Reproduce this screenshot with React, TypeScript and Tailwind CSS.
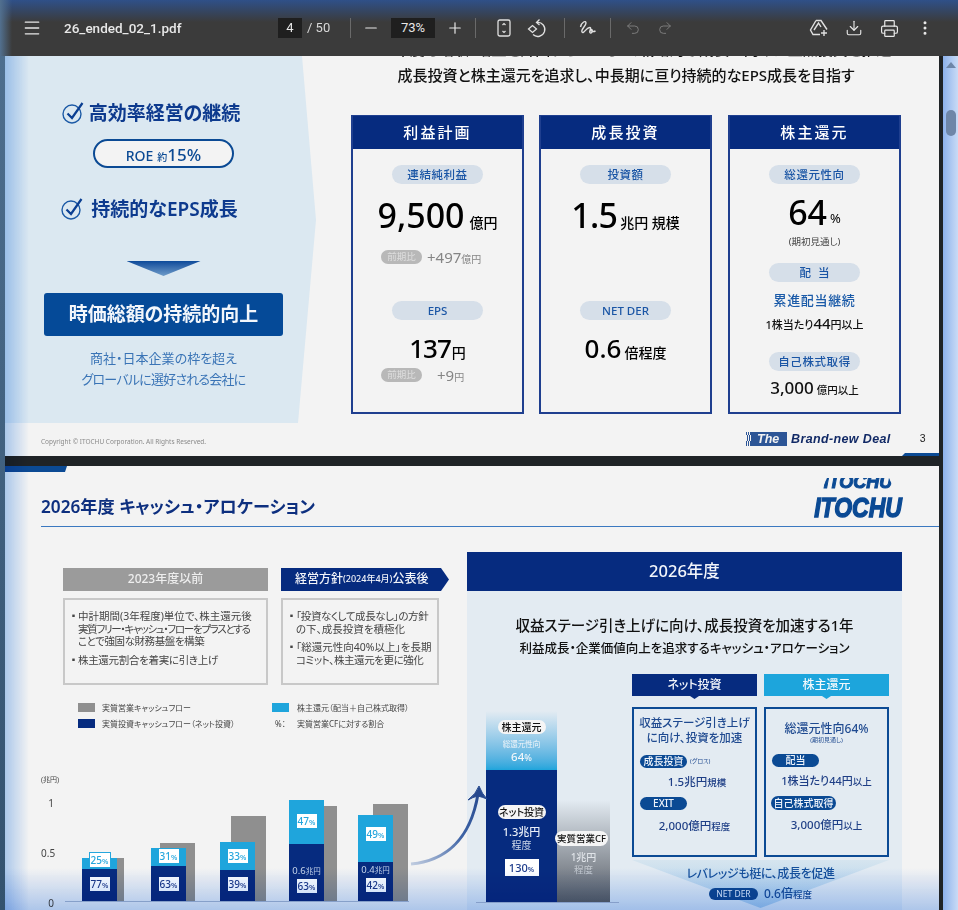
import React from "react";
import { Menu, Minus, Plus, Undo2, Redo2, Download, Printer, EllipsisVertical } from "lucide-react";

function Check() {
  return (
    <svg width="22" height="22" viewBox="0 0 22 22" fill="none" className="shrink-0">
      <circle cx="10" cy="12" r="9" stroke="#1c5aa6" strokeWidth="1.4" />
      <path d="M5.5 11.5 L10 16 L20.5 1" stroke="#0b3f92" strokeWidth="2.2" />
    </svg>
  );
}

function Pill({ children, spaced }: { children: React.ReactNode; spaced?: boolean }) {
  return (
    <div className={"w-[91px] h-[19px] rounded-full bg-[#d6dfe9] flex items-center justify-center text-[11.5px] font-medium text-[#1a55a5] " + (spaced ? "tracking-[0.05em]" : "")}>
      {children}
    </div>
  );
}

function Card({ title, children }: { title: string; children: React.ReactNode }) {
  return (
    <div className="w-[173px] h-[299px] border-2 border-[#1f3f8f] flex flex-col">
      <div className="h-[33px] -mt-[1px] bg-[#062b7f] text-white flex items-center justify-center text-[15px] font-medium tracking-[0.14em] shrink-0">
        {title}
      </div>
      <div className="flex flex-col items-center pt-[16px]">{children}</div>
    </div>
  );
}

function Compare({ value, unit, gap }: { value: string; unit: string; gap: string }) {
  return (
    <div className="w-[113px] flex items-center h-[14px] whitespace-nowrap">
      <div className="w-[41px] h-[14px] rounded-full bg-[#b8b8b8] text-[#dedede] text-[9.5px] flex items-center justify-center shrink-0">前期比</div>
      <div className={"flex items-baseline text-[#858585] " + gap}>
        <span className="text-[15px]">{value}</span>
        <span className="text-[10px]">{unit}</span>
      </div>
    </div>
  );
}

function Slide1() {
  return (
    <section className="h-[400px] bg-[#f3f3f3] overflow-hidden flex flex-col shrink-0">
      <div className="flex h-[367px] shrink-0">
        <div className="w-[311px] h-[367px] bg-[#dbe8f1] [clip-path:polygon(0_0,297px_0,311px_164px,293px_367px,0_367px)] pl-[39px] shrink-0">
          <div className="w-[239px] flex flex-col items-center pt-[44px]">
            <div className="h-[26px] mr-[25px] flex items-center gap-[5px] text-[19px] font-semibold text-[#0d3a8e] whitespace-nowrap">
              <Check />
              <span>高効率経営の継続</span>
            </div>
            <div className="mt-[13px] w-[141px] h-[29px] rounded-full border-2 border-[#0b4a94] bg-[#f3f3f3] text-[#0b4a94] flex items-baseline justify-center pt-[1px] font-medium whitespace-nowrap">
              <span className="text-[14px]">ROE</span>
              <span className="text-[10px] ml-[4px]">約</span>
              <span className="text-[17px]">15%</span>
            </div>
            <div className="mt-[28px] h-[26px] mr-[28px] flex items-center gap-[8px] text-[19px] font-semibold text-[#0d3a8e] whitespace-nowrap">
              <Check />
              <span>持続的なEPS成長</span>
            </div>
            <div className="mt-[39px] w-[74px] h-[15px] bg-linear-to-b from-[#0a4a9a] to-[#6f9cc9] [clip-path:polygon(0_0,100%_0,50%_100%)]" />
            <div className="mt-[17px] w-[239px] h-[43px] rounded-[3px] bg-[#054a98] text-[#f2f6fb] text-[19px] font-semibold flex items-center justify-center whitespace-nowrap">
              時価総額の持続的向上
            </div>
            <div className="mt-[12px] text-center text-[13px] leading-[21px] text-[#3a74b6] whitespace-nowrap">
              <div>商社・日本企業の枠を超え</div>
              <div className="tracking-[-0.06em]">グローバルに選好される会社に</div>
            </div>
          </div>
        </div>
        <div className="pl-[35px] w-[623px]">
          <div className="-mt-[20px] w-[550px] text-center text-[15px] font-medium leading-[26px] text-[#111] whitespace-nowrap">
            <div className="overflow-hidden">2026年度も増収・増益を計画するとともに、戦略的な成長に向けた重点投資を推進</div>
            <div>成長投資と株主還元を追求し、中長期に亘り持続的なEPS成長を目指す</div>
          </div>
          <div className="mt-[27px] flex">
            <Card title="利益計画">
              <Pill spaced>連結純利益</Pill>
              <div className="mt-[11px] h-[41px] flex items-baseline text-black whitespace-nowrap">
                <span className="text-[34px] leading-[41px] font-medium">9,500</span>
                <span className="text-[14px] ml-[5px] font-medium">億円</span>
              </div>
              <div className="mt-[14px]"><Compare value="+497" unit="億円" gap="ml-[5px]" /></div>
              <div className="mt-[37px]"><Pill>EPS</Pill></div>
              <div className="mt-[11px] h-[34px] flex items-baseline text-black whitespace-nowrap">
                <span className="text-[26px] leading-[34px] font-medium tracking-[-0.04em]">137</span>
                <span className="text-[14px] font-medium ml-[1px]">円</span>
              </div>
              <div className="mt-[3px]"><Compare value="+9" unit="円" gap="ml-[15px]" /></div>
            </Card>
            <div className="ml-[15px]">
              <Card title="成長投資">
                <Pill spaced>投資額</Pill>
                <div className="mt-[11px] h-[41px] flex items-baseline text-black whitespace-nowrap">
                  <span className="text-[34px] leading-[41px] font-medium tracking-[-0.02em]">1.5</span>
                  <span className="text-[14px] ml-[3px] font-medium">兆円 規模</span>
                </div>
                <div className="mt-[65px]"><Pill>NET DER</Pill></div>
                <div className="mt-[11px] h-[34px] flex items-baseline text-black whitespace-nowrap">
                  <span className="text-[26px] leading-[34px] font-medium">0.6</span>
                  <span className="text-[14px] ml-[3px] font-medium">倍程度</span>
                </div>
              </Card>
            </div>
            <div className="ml-[16px]">
              <Card title="株主還元">
                <Pill spaced>総還元性向</Pill>
                <div className="mt-[10px] h-[36px] flex items-end text-black whitespace-nowrap">
                  <span className="text-[34px] leading-[36px] font-medium">64</span>
                  <span className="text-[13px] leading-[24px] ml-[3px]">%</span>
                </div>
                <div className="mt-[6px] text-[9.5px] leading-[12px] text-[#444]">(期初見通し)</div>
                <div className="mt-[15px]"><Pill><span className="tracking-[0.6em] ml-[0.6em]">配当</span></Pill></div>
                <div className="mt-[9px] text-[13px] leading-[18px] font-medium tracking-[0.05em] text-[#1a5aa8] whitespace-nowrap">累進配当継続</div>
                <div className="mt-[3px] h-[18px] flex items-baseline font-medium text-[#111] whitespace-nowrap">
                  <span className="text-[11px]">1株当たり</span>
                  <span className="text-[15px]">44</span>
                  <span className="text-[11px]">円以上</span>
                </div>
                <div className="mt-[22px]"><Pill spaced>自己株式取得</Pill></div>
                <div className="mt-[4px] h-[22px] flex items-baseline font-medium text-[#111] whitespace-nowrap">
                  <span className="text-[17px]">3,000</span>
                  <span className="text-[10.5px] ml-[3px]">億円以上</span>
                </div>
              </Card>
            </div>
          </div>
        </div>
      </div>
      <div className="h-[33px] flex pl-[36px] relative">
        <div className="mt-[14px] text-[6.5px] leading-[10px] text-[#8a8a8a] w-[705px]">Copyright © ITOCHU Corporation. All Rights Reserved.</div>
        <div className="mt-[9px] h-[14px] flex items-center whitespace-nowrap font-['Liberation_Sans',sans-serif] italic font-bold">
          <div className="w-[5px] h-[14px] bg-[repeating-linear-gradient(100deg,#2c5596_0_1px,transparent_1px_2px)]" />
          <div className="w-[36px] h-[14px] bg-[#2c5596] text-[#f2f2f2] text-[12.5px] leading-[14px] pl-[6px]">The</div>
          <div className="ml-[4px] text-[12.5px] tracking-[0.03em] text-[#122a66]">Brand-new Deal</div>
          <div className="ml-[29px] text-[10.5px] not-italic font-normal text-[#222]">3</div>
        </div>
        <div className="absolute right-0 bottom-0 w-[37px] h-[3px] bg-[#0b4a94] [clip-path:polygon(3px_0,100%_0,100%_100%,0_100%)]" />
      </div>
    </section>
  );
}

function Pct({ v, light, boxed }: { v: string; light?: boolean; boxed?: boolean }) {
  return (
    <div className={"w-[20px] h-[14px] bg-white flex items-baseline justify-center leading-[14px] font-medium shrink-0 " + (light ? "text-[#25a6dd] " : "text-[#1b3a8a] ") + (boxed ? "outline-1 outline-[#25a6dd]" : "")}>
      <span className="text-[10px]">{v}</span>
      <span className="text-[7.5px]">%</span>
    </div>
  );
}

const groups = [
  { light: "h-[11px]", dark: "h-[32px]", gray: "h-[43px] -ml-[28px]", lt: "-mt-[5px]", dt: "mt-[8px]", lv: "25", dv: "77", boxed: true },
  { light: "h-[18px]", dark: "h-[35px]", gray: "h-[58px] -ml-[26px]", lt: "mt-[1px]", dt: "mt-[11px]", lv: "31", dv: "63" },
  { light: "h-[28px]", dark: "h-[31px]", gray: "h-[85px] -ml-[24px]", lt: "mt-[7px]", dt: "mt-[7px]", lv: "33", dv: "39" },
  { light: "h-[44px]", dark: "h-[57px]", gray: "h-[95px] -ml-[22px]", lt: "mt-[14px]", dt: "mt-[21px]", lv: "47", dv: "63", amount: "0.6" },
  { light: "h-[47px]", dark: "h-[39px]", gray: "h-[97px] -ml-[20px]", lt: "mt-[12px]", dt: "mt-[2px]", lv: "49", dv: "42", amount: "0.4" },
];

function Chart() {
  return (
    <div className="flex mt-[46px] h-[132px]">
      <div className="w-[24px] shrink-0 text-[#444] flex flex-col">
        <div className="text-[7px] leading-[10px] h-[10px] mt-[1px] whitespace-nowrap">(兆円)</div>
        <div className="w-[13px] text-right text-[10px] leading-[12px] mt-[12px]">1</div>
        <div className="w-[13px] text-right text-[10px] leading-[12px] mt-[38px]">0.5</div>
        <div className="w-[13px] text-right text-[10px] leading-[12px] mt-[38px]">0</div>
      </div>
      <div className="w-[344px] h-[128px] pl-[17px] border-b-[1.5px] border-[#aebbd0] flex items-end shrink-0">
        {groups.map((g) => (
          <div key={g.lv} className="w-[69px] shrink-0 flex items-end">
            <div className="w-[35px] shrink-0 relative z-10 flex flex-col">
              <div className={"bg-[#1fa5dc] flex flex-col items-center " + g.light}>
                <div className={g.lt}><Pct v={g.lv} light boxed={g.boxed} /></div>
              </div>
              <div className={"bg-[#062b7f] flex flex-col items-center " + g.dark}>
                {g.amount ? (
                  <div className={"h-[12px] leading-[12px] flex items-baseline text-[#c9d6ea] whitespace-nowrap " + g.dt}>
                    <span className="text-[9.5px]">{g.amount}</span>
                    <span className="text-[7.5px]">兆円</span>
                  </div>
                ) : null}
                <div className={g.amount ? "mt-[2px]" : g.dt}><Pct v={g.dv} /></div>
              </div>
            </div>
            <div className={"w-[35px] shrink-0 bg-[#8f8f8f] " + g.gray} />
          </div>
        ))}
      </div>
    </div>
  );
}

function DarkPill({ children, className }: { children: React.ReactNode; className: string }) {
  return <div className={"h-[13px] rounded-full bg-[#0b4a94] text-[#eef3fa] text-[10px] leading-[13px] flex items-center justify-center font-medium whitespace-nowrap " + className}>{children}</div>;
}

function Amount({ value, unit, className }: { value: string; unit: string; className: string }) {
  return (
    <div className={"h-[16px] leading-[16px] flex items-baseline justify-center font-medium text-[#1f3f86] whitespace-nowrap " + className}>
      <span className="text-[11.5px]">{value}</span>
      <span className="text-[9.5px]">{unit}</span>
    </div>
  );
}

function Slide2() {
  return (
    <section className="flex-1 bg-[#f3f3f3] relative">
      <div className="h-[6px] w-[62px] bg-[#0b4a94] [clip-path:polygon(0_0,100%_0,calc(100%-2px)_100%,0_100%)]" />
      <div className="ml-[36px] h-[55px] border-b border-[#3a78c0] flex items-end justify-between pr-[36px]">
        <h1 className="mb-[6px] text-[17.2px] leading-[26px] font-semibold text-[#0d2f7f] whitespace-nowrap">2026年度 キャッシュ・アロケーション</h1>
        <div className="w-[90px] h-[48px] mb-[7px] flex flex-col items-center font-['Liberation_Sans',sans-serif] italic font-bold text-[#0b4a94] leading-none whitespace-nowrap">
          <div className="w-[72px] h-[11px] overflow-hidden flex items-end justify-center [clip-path:polygon(7%_0,93%_0,100%_100%,0_100%)] shrink-0 mt-[7px]">
            <span className="text-[18px] leading-[14px] [-webkit-text-stroke:1px_#0b4a94]">ITOCHU</span>
          </div>
          <div className="mt-[8px] text-[23px] leading-[20px] h-[20px] [-webkit-text-stroke:1.2px_#0b4a94] [transform:scaleY(1.2)]">ITOCHU</div>
        </div>
      </div>
      <div className="flex pl-[36px] relative">
        <div className="w-[426px] shrink-0 pt-[41px]">
          <div className="pl-[22px] flex text-[10.5px] leading-[12.5px] text-[#444]">
            <div className="w-[205px] shrink-0">
              <div className="h-[23px] bg-[#9b9b9b] text-[#eee] text-[12px] font-medium flex items-center justify-center">2023年度以前</div>
              <div className="mt-[7px] h-[87px] border-2 border-[#c8c8c8] pl-[4px] pt-[10px]">
                <div className="flex">
                  <span className="w-[9px] text-[9px] shrink-0">▪</span>
                  <div className="whitespace-nowrap">
                    <div>中計期間(3年程度)単位で、株主還元後</div>
                    <div className="tracking-[-0.12em]">実質フリー・キャッシュ・フローをプラスとする</div>
                    <div className="tracking-[-0.04em]">ことで強固な財務基盤を構築</div>
                  </div>
                </div>
                <div className="flex mt-[6px]">
                  <span className="w-[9px] text-[9px] shrink-0">▪</span>
                  <div className="whitespace-nowrap tracking-[-0.03em]">株主還元割合を着実に引き上げ</div>
                </div>
              </div>
            </div>
            <div className="ml-[13px] shrink-0">
              <div className="w-[168px] h-[23px] bg-[#062b7f] text-[#f2f4f9] text-[12px] font-medium flex items-center pl-[14px] [clip-path:polygon(0_0,160px_0,100%_50%,160px_100%,0_100%)] whitespace-nowrap">
                経営方針<span className="text-[9px]">(2024年4月)</span>公表後
              </div>
              <div className="mt-[7px] w-[158px] h-[87px] border-2 border-[#c8c8c8] pl-[4px] pt-[10px]">
                <div className="flex">
                  <span className="w-[9px] text-[9px] shrink-0">▪</span>
                  <div className="whitespace-nowrap">
                    <div className="tracking-[-0.04em]">「投資なくして成長なし」の方針</div>
                    <div>の下、成長投資を積極化</div>
                  </div>
                </div>
                <div className="flex mt-[6px]">
                  <span className="w-[9px] text-[9px] shrink-0">▪</span>
                  <div className="whitespace-nowrap">
                    <div>「総還元性向40%以上」を長期</div>
                    <div className="tracking-[-0.04em]">コミット、株主還元を更に強化</div>
                  </div>
                </div>
              </div>
            </div>
          </div>
          <div className="mt-[18px] pl-[37px] grid grid-cols-[194px_1fr] gap-y-[7px] text-[8px] leading-[9px] text-[#444] whitespace-nowrap">
            <div className="flex items-center gap-[7px]"><span className="w-[17px] h-[9px] bg-[#8f8f8f]" />実質営業キャッシュフロー</div>
            <div className="flex items-center gap-[8px]"><span className="w-[17px] h-[9px] bg-[#1fa5dc]" />株主還元（配当＋自己株式取得）</div>
            <div className="flex items-center gap-[7px]"><span className="w-[17px] h-[9px] bg-[#062b7f]" />実質投資キャッシュフロー（ネット投資）</div>
            <div className="flex items-center"><span className="w-[25px] pl-[3px]">%：</span>実質営業CFに対する割合</div>
          </div>
          <Chart />
        </div>
        <svg className="absolute left-[400px] top-[253px] z-20" width="90" height="90" viewBox="0 0 90 90" fill="none">
          <defs>
            <linearGradient id="arc" x1="0" y1="80" x2="75" y2="10" gradientUnits="userSpaceOnUse">
              <stop offset="0" stopColor="#c5d0e2" />
              <stop offset="0.55" stopColor="#3f64a6" />
              <stop offset="1" stopColor="#25488e" />
            </linearGradient>
          </defs>
          <path d="M6 84 C38 81 65 62 73 14" stroke="url(#arc)" strokeWidth="3" />
          <path d="M63 20 Q71 14 74 6 Q77 14 82 19 Q77 17 73 16 Q68 17 63 20 Z" fill="#25488e" stroke="#25488e" strokeWidth="1" />
        </svg>
        <div className="w-[435px] shrink-0 mt-[25px] bg-[#e3ebf2] h-[400px]">
          <div className="h-[39px] bg-[#062b7f] text-[#f2f5fa] text-[16.5px] font-medium flex items-center justify-center">2026年度</div>
          <div className="pt-[23px] text-center text-[#111] font-medium whitespace-nowrap">
            <div className="text-[14.5px] leading-[22px]">収益ステージ引き上げに向け、成長投資を加速する1年</div>
            <div className="mt-[2px] text-[12.5px] leading-[22px]">利益成長・企業価値向上を追求するキャッシュ・アロケーション</div>
          </div>
          <div className="flex mt-[14px] pl-[9px]">
            <div className="w-[143px] h-[229px] pl-[10px] border-b-[1.5px] border-[#aebbd0] flex items-end shrink-0">
              <div className="w-[71px] flex flex-col shrink-0">
                <div className="h-[59px] bg-linear-to-b from-[#e3ebf2] to-[#1da5dc] flex flex-col items-center pt-[9px] text-[#f2f6fa]">
                  <div className="w-[48px] h-[14px] rounded-full bg-[#f5f5f5] text-[#111] text-[10px] leading-[14px] font-medium text-center whitespace-nowrap">株主還元</div>
                  <div className="mt-[5px] text-[7.5px] leading-[10px]">総還元性向</div>
                  <div className="mt-[1px] text-[11.5px] leading-[13px] font-medium">64<span className="text-[9px]">%</span></div>
                </div>
                <div className="h-[132px] bg-[#062b7f] flex flex-col items-center pt-[35px] text-[#e8eef7]">
                  <div className="w-[48px] h-[14px] rounded-full bg-[#f5f5f5] text-[#111] text-[10px] leading-[14px] font-medium text-center whitespace-nowrap">ネット投資</div>
                  <div className="mt-[6px] text-[11px] leading-[14px] font-medium">1.3兆円</div>
                  <div className="text-[10px] leading-[13px] text-[#cfd9ea]">程度</div>
                  <div className="mt-[7px] w-[34px] h-[17px] bg-white text-[#1b3a8a] flex items-baseline justify-center leading-[17px] font-medium">
                    <span className="text-[11px]">130</span><span className="text-[7.5px]">%</span>
                  </div>
                </div>
              </div>
              <div className="w-[53px] h-[102px] bg-linear-to-b from-[#e3ebf2] to-[#5b6068] shrink-0 flex flex-col items-center pt-[31px] text-[#dfe3e8]">
                <div className="-ml-[4px] w-[53px] h-[15px] rounded-full bg-[#f5f5f5] text-[#111] text-[9.5px] leading-[15px] font-medium text-center whitespace-nowrap">実質営業CF</div>
                <div className="mt-[5px] text-[10px] leading-[13px] font-medium">1兆円</div>
                <div className="text-[9.5px] leading-[12px] text-[#c5cad0]">程度</div>
              </div>
            </div>
            <div className="ml-[13px] w-[257px] shrink-0">
              <div className="flex gap-[7px]">
                <div className="w-[125px] shrink-0">
                  <div className="h-[22px] bg-[#062b7f] text-[#f2f5fa] text-[12px] font-medium flex items-center justify-center">ネット投資</div>
                  <div className="w-[9px] h-[3px] mx-auto bg-[#062b7f] [clip-path:polygon(0_0,100%_0,50%_100%)]" />
                  <div className="mt-[8px] h-[150px] border-2 border-[#0b4a94] flex flex-col">
                    <div className="pt-[6px] text-center text-[11.5px] leading-[15px] font-medium text-[#1f4a90] whitespace-nowrap">収益ステージ引き上げ<br />に向け、投資を加速</div>
                    <div className="mt-[10px] pl-[6px] flex items-center gap-[3px] whitespace-nowrap">
                      <DarkPill className="w-[47px]">成長投資</DarkPill>
                      <span className="text-[6px] text-[#1f4a90]">(グロス)</span>
                    </div>
                    <Amount value="1.5兆円" unit="規模" className="mt-[6px] pl-[5px]" />
                    <div className="mt-[7px] pl-[6px]"><DarkPill className="w-[47px]">EXIT</DarkPill></div>
                    <Amount value="2,000億円" unit="程度" className="mt-[8px]" />
                  </div>
                </div>
                <div className="w-[125px] shrink-0">
                  <div className="h-[22px] bg-[#1da5dc] text-[#f2f8fc] text-[12px] font-medium flex items-center justify-center">株主還元</div>
                  <div className="w-[9px] h-[3px] mx-auto bg-[#1da5dc] [clip-path:polygon(0_0,100%_0,50%_100%)]" />
                  <div className="mt-[8px] h-[150px] border-2 border-[#0b4a94] flex flex-col">
                    <div className="pt-[12px] text-center text-[12px] leading-[15px] font-medium text-[#1f4a90] whitespace-nowrap">総還元性向64%</div>
                    <div className="text-center text-[6px] leading-[8px] text-[#1f4a90]">(期初見通し)</div>
                    <div className="mt-[10px] pl-[6px]"><DarkPill className="w-[47px]">配当</DarkPill></div>
                    <div className="mt-[6px] h-[16px] leading-[16px] flex items-baseline justify-center font-medium text-[#1f3f86] whitespace-nowrap">
                      <span className="text-[11px]">1株当たり44円</span>
                      <span className="text-[9.5px]">以上</span>
                    </div>
                    <div className="mt-[7px] pl-[5px]"><DarkPill className="w-[65px] h-[14px]">自己株式取得</DarkPill></div>
                    <Amount value="3,000億円" unit="以上" className="mt-[7px]" />
                  </div>
                </div>
              </div>
              <div className="mt-[3px] w-[257px] h-[48px] relative flex flex-col items-center pt-[5px] text-[#14509c] whitespace-nowrap">
                <div className="absolute inset-0 bg-linear-to-b from-[#d6e5ef] to-[#a6cdea] [clip-path:polygon(0_0,100%_0,50%_100%)]" />
                <div className="relative text-[12px] tracking-[-0.03em] leading-[18px] font-medium">レバレッジも梃に、成長を促進</div>
                <div className="relative mt-[2px] flex items-center gap-[6px]">
                  <div className="w-[49px] h-[12px] rounded-full bg-[#0b4a94] text-[#eef3fa] text-[8.5px] leading-[12px] text-center">NET DER</div>
                  <div className="flex items-baseline font-medium">
                    <span className="text-[12px]">0.6倍</span>
                    <span className="text-[9.5px]">程度</span>
                  </div>
                </div>
              </div>
            </div>
          </div>
        </div>
      </div>
    </section>
  );
}

function Divider() {
  return <div className="w-px h-[20px] bg-[#6a6a6a] shrink-0" />;
}

function Toolbar() {
  return (
    <header className="h-[56px] bg-[#3b3b3b] relative z-30 flex items-center text-[#e8e8e8] pl-[22px] whitespace-nowrap shrink-0 font-['Roboto',sans-serif]">
      <div className="absolute inset-x-0 top-0 h-[22px] bg-linear-to-b from-[#2f5088] to-transparent" />
      <div className="absolute left-0 top-0 w-[12px] h-full bg-linear-to-r from-[#52708f] to-transparent" />
      <div className="relative flex items-center">
        <Menu size={20} strokeWidth={1.6} className="shrink-0 -mr-[1px]" />
        <div className="ml-[23px] w-[214px] text-[13.5px] font-medium">26_ended_02_1.pdf</div>
        <div className="w-[24px] h-[20px] bg-[#1f1f1f] text-[13px] leading-[20px] text-center">4</div>
        <div className="ml-[5px] w-[43px] text-[13px] text-[#d8d8d8]">/ 50</div>
        <Divider />
        <Minus size={18} strokeWidth={1.6} className="ml-[11px]" />
        <div className="ml-[11px] w-[44px] h-[20px] bg-[#1f1f1f] text-[13px] leading-[20px] text-center">73%</div>
        <Plus size={18} strokeWidth={1.6} className="ml-[11px]" />
        <div className="ml-[11px]"><Divider /></div>
        <svg width="16" height="18" viewBox="0 0 16 18" fill="none" stroke="#e0e0e0" strokeWidth="1.3" className="ml-[20px]">
          <rect x="2" y="1" width="12" height="16" rx="1.8" />
          <path d="M6.5 6 L8 4.5 L9.5 6 M6.5 12 L8 13.5 L9.5 12" strokeWidth="1.2" />
        </svg>
        <svg width="20" height="20" viewBox="0 0 20 20" fill="none" stroke="#e0e0e0" strokeWidth="1.3" className="ml-[15px]">
          <path d="M10 4.5 A7 7 0 1 1 6 16.5" />
          <path d="M12.5 1.5 L9.5 4.5 L12.5 7" />
          <path d="M1.5 11 L5.5 7.5 L9.5 11 L5.5 14.5 Z" />
        </svg>
        <div className="ml-[17px]"><Divider /></div>
        <svg width="18" height="16" viewBox="0 0 18 16" fill="none" stroke="#e0e0e0" strokeWidth="1.4" className="ml-[14px]">
          <path d="M1.5 7 C2.5 2 7 0 7 3 C7 6 1.5 9.5 3 12 C4.5 14.5 7 8 10.5 7.5 C13.5 7 9 12.5 11.5 13 C13.5 13.4 14 9 12 9.5 C10.5 10 13.5 12.5 16.5 11" />
        </svg>
        <div className="ml-[13px]"><Divider /></div>
        <Undo2 size={16} strokeWidth={1.4} className="ml-[14px] text-[#808080]" />
        <Redo2 size={16} strokeWidth={1.4} className="ml-[16px] text-[#808080]" />
        <svg width="20" height="20" viewBox="0 0 20 20" fill="none" stroke="#e0e0e0" strokeWidth="1.4" className="ml-[136px]">
          <path d="M7 2.5 H12 L18 11.5 M7 2.5 L1.5 12 L4 16.5 H11 M5 12 L9.5 5 L12 9" />
          <path d="M15 12 V18 M12 15 H18" />
        </svg>
        <Download size={18} strokeWidth={1.5} className="ml-[16px]" />
        <Printer size={19} strokeWidth={1.5} className="ml-[17px]" />
        <EllipsisVertical size={18} strokeWidth={2} className="ml-[17px]" />
      </div>
    </header>
  );
}

export default function App() {
  return (
    <div className="w-[958px] h-[910px] overflow-hidden relative bg-[#1f2326] flex flex-col font-['Noto_Sans','Noto_Sans_CJK_JP',sans-serif] [font-feature-settings:'palt']">
      <Toolbar />
      <div className="flex flex-1 min-h-0">
        <main className="w-[934px] ml-[5px] flex flex-col gap-[10px] shrink-0 overflow-hidden">
          <Slide1 />
          <Slide2 />
        </main>
        <aside className="ml-[4px] w-[15px] bg-linear-to-r from-[#8db2ec] to-[#c9dbf5] flex flex-col items-center shrink-0">
          <div className="mt-[6px] w-0 h-0 border-x-[5px] border-x-transparent border-b-[6px] border-b-[#6e86a8]" />
          <div className="mt-[42px] w-[10px] h-[26px] rounded-[5px] bg-[#6e86a8]" />
        </aside>
      </div>
      <div className="absolute left-0 top-0 bottom-0 w-[5px] bg-linear-to-b from-[#4f7090] to-[#33526f] z-20" />
      <div className="absolute left-[5px] top-[56px] bottom-0 w-[24px] bg-linear-to-r from-[#b4d2f6] to-transparent mix-blend-multiply z-20" />
      <div className="absolute left-[5px] right-[19px] bottom-0 h-[42px] bg-linear-to-b from-transparent to-[#b6d0f6] mix-blend-multiply z-20" />
    </div>
  );
}
